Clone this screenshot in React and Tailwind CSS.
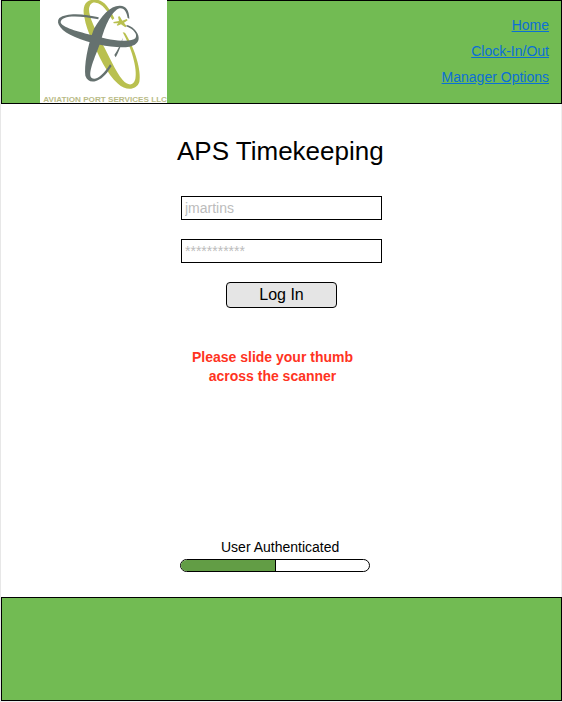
function Logo() {
  return (
    <svg className="block h-[103px] w-[127px] shrink-0 bg-white" viewBox="30 0 381 309">
      <g fill="#b9c04f">
        <path d="M183 0 C164 4 157 24 163 51 C167 75 175 98 187 122 C204 164 231 222 264 251 C287 273 320 271 328 246 C335 213 315 145 285 98 L278 97 C304 143 323 207 316 237 C311 258 294 258 278 240 C256 215 236 165 216 130 C198 92 176 50 177 27 C179 12 187 5 197 8 C216 10 233 32 247 60 L253 55 C239 25 222 3 205 0 Z" />
        <path d="M264 50 L269 49 L277 62 L290 57 L293 61 L282 68 L290 79 L286 82 L273 73 L263 77 L260 75 L265 70 L251 70 L250 66 L267 63 Z" />
      </g>
      <g fill="#65716f">
        <path d="M206 52 C169 42 110 36 88 54 C75 70 94 94 135 111 C187 134 260 146 298 140 C331 134 334 108 312 87 C306 81 298 77 290 75 L289 79 C311 88 324 103 316 115 C304 128 243 122 194 107 C143 96 94 81 92 67 C92 44 150 46 205 58 Z" />
        <path d="M298 56 C297 31 289 18 270 17 C241 16 214 48 192 86 C172 137 162 198 166 227 C174 253 205 250 231 218 L245 198 L240 193 C220 225 198 243 185 234 C172 222 193 176 213 123 C225 75 247 31 269 25 C284 23 290 38 293 54 Z" />
        <path d="M278 113 C276 134 265 157 257 172 L253 165 C264 149 272 132 278 113 Z" />
      </g>
      <text x="40" y="306" textLength="371" lengthAdjust="spacingAndGlyphs" fill="#b9bb86" fontSize="19" className="font-['Liberation_Sans',Arial,sans-serif] font-bold">
        AVIATION PORT SERVICES LLC
      </text>
    </svg>
  );
}

export default function App() {
  return (
    <div className="flex h-[702px] w-[562px] flex-col overflow-hidden border-l border-[#e7e7e7] bg-white font-['Liberation_Sans',Arial,sans-serif] text-black">
      <header className="flex h-[104px] shrink-0 justify-between border border-black bg-[#72bb53] pr-3 pl-[38px]">
        <div className="-mt-px"><Logo /></div>
        <nav className="flex flex-col items-end pt-[11px] text-sm leading-[26px] text-[#0b6fd6]">
          <a href="#home" className="underline">Home</a>
          <a href="#clock" className="underline">Clock-In/Out</a>
          <a href="#manager" className="underline">Manager Options</a>
        </nav>
      </header>
      <main className="flex h-[493px] shrink-0 flex-col items-start border-r border-[#eeeeee]">
        <h1 className="mt-8 ml-[176px] text-[26px] leading-[30px] whitespace-nowrap">APS Timekeeping</h1>
        <input readOnly value="jmartins" className="mt-[30px] ml-[180px] h-6 w-[201px] border border-black px-[3px] text-sm text-[#bcbcbc] outline-none" />
        <input readOnly value="***********" className="mt-[19px] ml-[180px] h-6 w-[201px] border border-black px-[3px] pb-px text-sm text-[#bcbcbc] outline-none" />
        <button className="mt-[19px] ml-[225px] h-[26px] w-[111px] rounded-[4px] border border-black bg-[#e5e5e5] text-base leading-6">Log In</button>
        <p className="mt-10 ml-[180px] w-[183px] text-center text-sm leading-[19px] font-bold text-[#ff3322]">
          Please slide your thumb<br />across the scanner
        </p>
        <p className="mt-[153px] ml-[220px] text-sm leading-4 whitespace-nowrap">User Authenticated</p>
        <div className="mt-1 ml-[179px] h-[13px] w-[190px] overflow-hidden rounded-full border border-black">
          <div className="h-full w-[95px] border-r border-black bg-[#629d45]" />
        </div>
      </main>
      <footer className="h-[104px] shrink-0 border border-black bg-[#72bb53]" />
      <div className="h-px bg-[#eeeeee]" />
    </div>
  );
}
